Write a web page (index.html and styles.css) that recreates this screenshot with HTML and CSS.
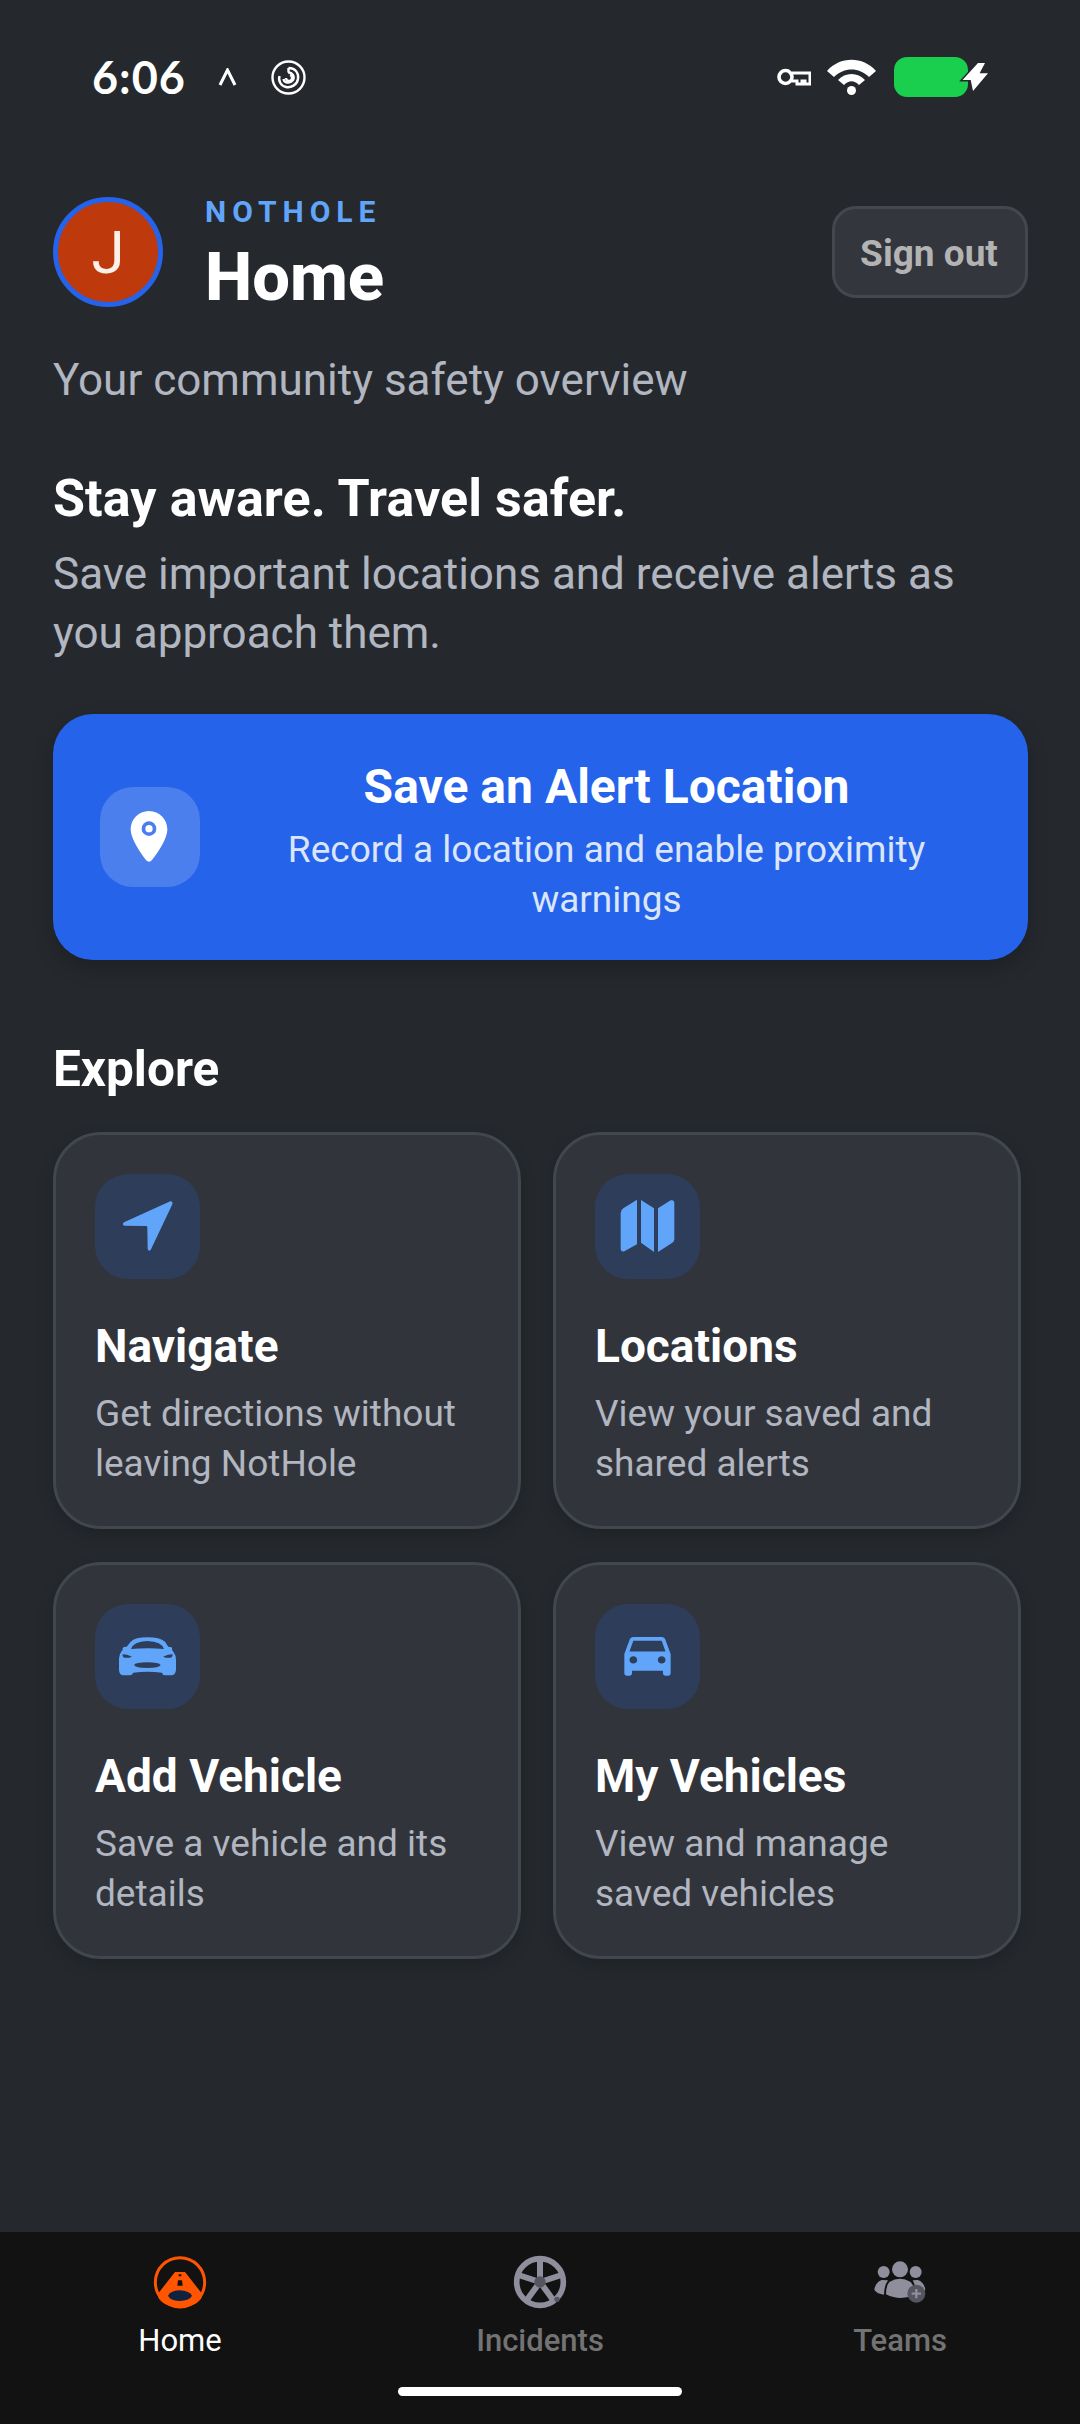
FILE: index.html
```html
<!DOCTYPE html>
<html lang="en">
<head>
<meta charset="utf-8">
<title>NotHole Home</title>
<link rel="stylesheet" href="styles.css">
</head>
<body>
<div class="screen">
  <div class="status">
    <span class="time">6:06</span>
    <svg class="st-caret" viewBox="0 0 19 18"><path d="M2 17 L9.500 2 L17 17" fill="none" stroke="#fff" stroke-width="3"/></svg>
    <svg class="st-swirl" viewBox="0 0 35 35" fill="none" stroke="#fff"><circle cx="17.500" cy="17.500" r="16" stroke-width="2.400"/><path d="M17.500 8 C25 8 28 14 27 19 C26 25 20 28 15 27 C10 26 7 21 8.500 16 M12.500 19 C13 23 19 24 22 20 C24 16 21 12 17 12.500 M17.500 12.500 V8" stroke-width="2.400"/><path d="M15 18 A3 3 0 1 0 19 15" stroke-width="2.200"/></svg>
    <div class="st-right">
      <svg class="st-key" viewBox="0 0 34 20"><circle cx="8.500" cy="10" r="6.500" fill="none" stroke="#fff" stroke-width="3.600"/><path d="M15 6 H33 V17 H28 V14 H25 V17 H20 V14 H15" fill="none" stroke="#fff" stroke-width="3"/></svg>
      <svg class="st-wifi" viewBox="0 0 51 36"><path d="M1 12 C14 -3 37 -3 50 12 L43 18 C33 8 18 8 8 18 Z" fill="#fff"/><path d="M12 21 C19 13 32 13 39 21 L33 26 C28 21 23 21 18 26 Z" fill="#fff"/><ellipse cx="25.500" cy="31.500" rx="4.500" ry="4.500" fill="#fff"/></svg>
      <svg class="st-batt" viewBox="0 0 94 40"><rect width="74" height="40" rx="13" fill="#19cf4d"/><path d="M84 6 H91 L85.600 16.300 H94 L79 34 L76.700 23 H68.500 Z" fill="#fff" stroke="#25292e" stroke-width="3" paint-order="stroke"/></svg>
    </div>
  </div>

  <main class="main">
    <header class="head">
      <div class="avatar">J</div>
      <div class="head-text">
        <div class="brand">NOTHOLE</div>
        <h1 class="title">Home</h1>
      </div>
      <button class="signout">Sign out</button>
    </header>
    <p class="overview">Your community safety overview</p>
    <h2 class="hero">Stay aware. Travel safer.</h2>
    <p class="hero-sub">Save important locations and receive alerts as you approach them.</p>

    <section class="cta">
      <div class="cta-icon">
        <svg viewBox="210 261 300 300"><path d="M357 333 C325 333 302 358 302 388 C302 420 340 470 348 480 Q357 490 366 480 C375 470 412 420 412 388 C412 358 389 333 357 333Z" fill="#fff"/><circle cx="357" cy="386" r="22" fill="#4b7cf0"/><circle cx="357" cy="386" r="11" fill="#fff"/></svg>
      </div>
      <div class="cta-text">
        <div class="cta-title">Save an Alert Location</div>
        <div class="cta-sub">Record a location and enable proximity warnings</div>
      </div>
    </section>

    <h2 class="explore">Explore</h2>
    <div class="grid">
      <article class="card">
        <div class="card-icon"><svg viewBox="165 162 315 315"><path class="ic" d="M391 244 L252 307 Q245 313 252 317 L318 318 Q322 318 322 322 L323 387 Q326 396 332 390 L397 253 Q399 243 391 244Z"/></svg></div>
        <h3 class="card-title">Navigate</h3>
        <p class="card-desc">Get directions without leaving NotHole</p>
      </article>
      <article class="card">
        <div class="card-icon"><svg viewBox="165 162 315 315"><path class="ic" d="M291 240 L291 373 L253 394 Q242 397 242 385 L242 280 Q242 270 250 265 L285 243 Q289 240 291 240Z M303 240 L342 265 L342 396 L303 368 Z M354 265 L392 241 Q403 238 403 250 L403 358 Q403 365 397 368 L354 396Z"/></svg></div>
        <h3 class="card-title">Locations</h3>
        <p class="card-desc">View your saved and shared alerts</p>
      </article>
      <article class="card">
        <div class="card-icon"><svg viewBox="165 132 315 315"><path class="ic" fill-rule="evenodd" d="M272 245 Q285 232 322 232 Q360 232 375 245 L385 260 L395 262 Q398 268 396 270 L400 275 Q408 285 408 300 L408 330 Q406 345 396 346 L375 346 Q368 346 366 338 Q322 332 280 338 Q276 346 268 346 L248 346 Q238 345 237 330 L237 295 Q238 282 245 273 L248 270 Q246 263 252 261 L260 260Z M273 267 Q280 245 322 243 Q365 245 372 267 Q322 262 273 267Z M248 283 Q260 283 276 290 Q262 296 250 292 Q247 288 248 283Z M398 283 Q385 283 369 290 Q383 296 395 292 Q398 288 398 283Z M282 315 Q286 307 322 307 Q358 307 362 315 Q358 324 322 324 Q286 324 282 315Z"/></svg></div>
        <h3 class="card-title">Add Vehicle</h3>
        <p class="card-desc">Save a vehicle and its details</p>
      </article>
      <article class="card">
        <div class="card-icon"><svg viewBox="165 132 315 315"><path class="ic" transform="translate(229.840 194.750) scale(7.720 7.250)" d="M18.920 6.010C18.720 5.420 18.160 5 17.500 5h-11c-.66 0-1.210.42-1.420 1.010L3 12v8c0 .55.45 1 1 1h1c.55 0 1-.45 1-1v-1h12v1c0 .55.45 1 1 1h1c.55 0 1-.45 1-1v-8l-2.080-5.990zM6.500 16c-.83 0-1.500-.67-1.500-1.500S5.670 13 6.500 13s1.500.67 1.500 1.500S7.330 16 6.500 16zm11 0c-.83 0-1.500-.67-1.500-1.500s.67-1.500 1.500-1.500 1.500.67 1.500 1.500-.67 1.500-1.500 1.500zM5 11l1.500-4.500h11L19 11H5z"/></svg></div>
        <h3 class="card-title">My Vehicles</h3>
        <p class="card-desc">View and manage saved vehicles</p>
      </article>
    </div>
  </main>

  <nav class="tabs">
    <div class="tab active">
      <svg class="tab-icon" viewBox="270 95 180 180"><circle cx="360" cy="186" r="74" fill="none" stroke="#ff5500" stroke-width="9"/><path d="M345 155 H375 L422 215 Q434 230 410 248 Q360 275 310 248 Q286 230 298 215 Z" fill="#ff5500"/><path d="M324 226 Q330 212 358 210 Q390 212 396 226 Q390 240 358 242 Q330 240 324 226Z" fill="#0f2340"/><path d="M356 162 H364 V168 H356Z M354 180 H366 L368 196 H352Z" fill="#121212"/></svg>
      <span class="tab-label">Home</span>
    </div>
    <div class="tab">
      <svg class="tab-icon" viewBox="210 98 180 180"><circle cx="300" cy="188" r="70" fill="none" stroke="#8e8e9c" stroke-width="17"/><g stroke="#8e8e9c" stroke-width="18"><path d="M300 188 V120"/><path d="M300 188 L365 167"/><path d="M300 188 L340 243"/><path d="M300 188 L260 243"/><path d="M300 188 L235 167"/></g><circle cx="300" cy="188" r="17" fill="#55555f"/><circle cx="351" cy="240" r="8" fill="#55555f"/></svg>
      <span class="tab-label">Incidents</span>
    </div>
    <div class="tab">
      <svg class="tab-icon" viewBox="150 98 180 180"><g fill="#8e8e9c"><circle cx="240" cy="150" r="24"/><circle cx="191" cy="158" r="18"/><circle cx="287" cy="158" r="18"/><path d="M198 225 Q198 200 208 188 Q240 168 272 188 Q284 200 282 228 Q240 246 198 225Z"/><path d="M163 212 Q165 190 185 182 L204 183 Q192 200 192 226 Q172 224 163 212Z"/><path d="M316 212 Q314 190 294 182 L278 183 Q288 200 288 226 Q308 224 316 212Z"/></g><circle cx="289" cy="223" r="27" fill="#55555f"/><path d="M289 209 V237 M275 223 H303" stroke="#8e8e9c" stroke-width="7"/></svg>
      <span class="tab-label">Teams</span>
    </div>
    <div class="home-bar"></div>
  </nav>
</div>
</body>
</html>
```
FILE: styles.css
```css
* { box-sizing: border-box; margin: 0; padding: 0; }
html, body { width: 1080px; height: 2424px; background: #25292e; overflow: hidden; }
body { font-family: Roboto, "Noto Sans", sans-serif; color: #fff; }
.screen { width: 1080px; height: 2424px; display: flex; flex-direction: column; background: #25292e; }

.status { height: 154px; flex: none; display: flex; align-items: center; padding: 0 92px 0 92px; }
.time { font-family: Lato, sans-serif; font-size: 45px; font-weight: 700; letter-spacing: 1px; color: #fff; width: 93px; }
.st-caret { width: 19px; height: 18px; margin-left: 33px; }
.st-swirl { width: 35px; height: 35px; margin-left: 34px; }
.st-right { margin-left: auto; display: flex; align-items: center; }
.st-key { width: 34px; height: 20px; }
.st-wifi { width: 51px; height: 36px; margin-left: 15px; }
.st-batt { width: 94px; height: 40px; margin-left: 17px; }

.main { padding: 43px 52px 0 53px; flex: 1; }
.head { display: flex; align-items: center; height: 110px; }
.avatar { width: 110px; height: 110px; flex: none; border-radius: 50%; background: #be390b; border: 5px solid #2563eb; display: flex; align-items: center; justify-content: center; font-size: 60px; color: #fdf0e8; }
.head-text { margin-left: 42px; padding-top: 6px; }
.brand { font-size: 30px; line-height: 34px; font-weight: 700; letter-spacing: 6px; color: #60a5fa; }
.title { margin-top: 10px; font-size: 67px; line-height: 76px; font-weight: 800; color: #fff; }
.signout { margin-left: auto; width: 196px; height: 92px; padding: 2px 2px 0 0; background: #33363c; border: 3px solid #44474d; border-radius: 24px; color: #b3b3b3; font-family: Roboto, sans-serif; font-size: 37px; font-weight: 700; }

.overview { margin-top: 44px; font-size: 44px; line-height: 59px; color: #b1b6c0; }
.hero { margin-top: 59px; font-size: 52px; letter-spacing: .1px; line-height: 60px; font-weight: 700; color: #fff; }
.hero-sub { margin-top: 16px; font-size: 44px; line-height: 59px; color: #b1b6c0; }

.cta { margin-top: 51px; height: 246px; background: #2563eb; border-radius: 40px; display: flex; align-items: center; gap: 32px; padding: 0 47px; box-shadow: 0 8px 20px rgba(0,0,0,.22); }
.cta-icon { width: 100px; height: 100px; flex: none; border-radius: 33px; background: rgba(255,255,255,.18); }
.cta-icon svg { display: block; width: 100px; height: 100px; }
.cta-text { flex: 1; padding-top: 6px; text-align: center; }
.cta-title { font-size: 48px; line-height: 60px; font-weight: 700; color: #fff; position: relative; top: 1px; }
.cta-sub { margin-top: 9px; font-size: 37px; line-height: 50px; color: #dbe5fb; }

.explore { margin-top: 79px; font-size: 49.5px; line-height: 60px; font-weight: 700; color: #fff; }
.grid { margin-top: 33px; display: grid; grid-template-columns: 468px 468px; grid-auto-rows: 397px; column-gap: 32px; row-gap: 33px; }
.card { background: #31353b; border: 3px solid #42464d; border-radius: 48px; padding: 39px 39px 0; box-shadow: 0 6px 16px rgba(0,0,0,.18); }
.card-icon { width: 105px; height: 105px; border-radius: 33px; background: #2d3d5a; }
.card-icon svg { display: block; width: 105px; height: 105px; }
.ic { fill: #60a5fa; }
.card-title { margin-top: 37px; font-size: 46px; line-height: 60px; font-weight: 700; color: #fff; }
.card-desc { margin-top: 13px; font-size: 37px; line-height: 50px; color: #b1b6c0; }

.tabs { position: relative; flex: none; height: 192px; background: #121212; display: grid; grid-template-columns: repeat(3, 360px); }
.tab { display: flex; flex-direction: column; align-items: center; padding-top: 20px; }
.tab-icon { width: 60px; height: 60px; display: block; }
.tab-label { margin-top: 9px; font-size: 31px; line-height: 40px; font-weight: 500; color: #737373; }
.tab.active .tab-label { color: #fff; font-weight: 400; }
.home-bar { position: absolute; left: 398px; bottom: 28px; width: 284px; height: 9px; border-radius: 5px; background: #fff; }
```
